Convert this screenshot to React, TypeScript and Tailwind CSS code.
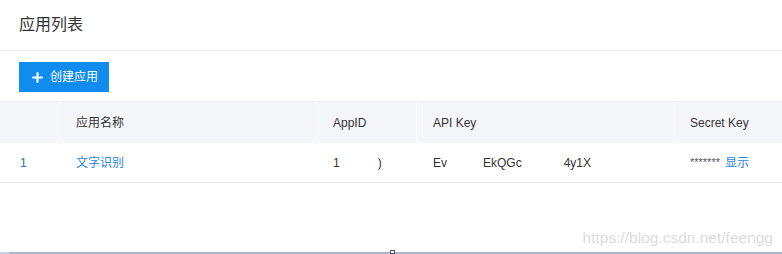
import { Plus } from "lucide-react";

type Col = {
  title: string;
  width: string;
};

const cols: Col[] = [
  { title: "", width: "w-[60px]" },
  { title: "应用名称", width: "w-[257px]" },
  { title: "AppID", width: "w-[100px]" },
  { title: "API Key", width: "w-[257px]" },
  { title: "Secret Key", width: "flex-1" },
];

export default function App() {
  return (
    <div
      className="relative w-[782px] h-[254px] bg-white overflow-hidden text-[#333]"
      style={{ fontFamily: '"Liberation Sans", "Noto Sans CJK SC", sans-serif' }}
    >
      <div className="h-[51px] flex items-center px-[19px] border-b border-[#e8e8e8]">
        <h1 className="text-[16px] text-[#333] leading-none">应用列表</h1>
      </div>

      <div className="px-[19px] pt-[11px] pb-[9px]">
        <button className="w-[90px] h-[30px] bg-[#108cee] text-white text-[12px] flex items-center justify-center gap-[5px]">
          <Plus className="w-[15px] h-[15px]" strokeWidth={3.4} />
          <span>创建应用</span>
        </button>
      </div>

      {/* 表格 */}
      <div className="border-t border-[#eef0f4]">
        <div className="flex h-[41px] bg-[#f5f6fa] text-[12px] text-[#333]">
          {cols.map((c, i) => (
            <div
              key={i}
              className={`${c.width} flex items-center pl-[16px] ${
                i < cols.length - 1 ? "border-r border-white" : ""
              }`}
            >
              {c.title}
            </div>
          ))}
        </div>
        <div className="flex h-[40px] text-[12px] border-b border-[#e8e8e8]">
          <div className="w-[60px] flex items-center pl-[20px] text-[#2a6fc0]">1</div>
          <div className="w-[257px] flex items-center pl-[16px] text-[#1f86e6]">文字识别</div>
          <div className="w-[100px] flex items-center pl-[16px] text-[#333]">
            <span>1</span>
            <span className="ml-[38px]">)</span>
          </div>
          <div className="w-[257px] flex items-center pl-[16px] text-[#333]">
            <span>Ev</span>
            <span className="ml-[36px]">EkQGc</span>
            <span className="ml-[42px]">4y1X</span>
          </div>
          <div className="flex-1 flex items-center pl-[16px] gap-[5px]">
            <span className="text-[#555] text-[11px]">*******</span>
            <span className="text-[#1f86e6]">显示</span>
          </div>
        </div>
      </div>

      <div className="absolute right-[9px] top-[226px] text-[15.5px] text-[#dcdcdc]">
        https://blog.csdn.net/feengg
      </div>

      <div className="absolute left-0 right-0 bottom-0 h-[2px] flex">
        <div className="w-[9px] bg-[#c8d2e0]" />
        <div className="flex-1 bg-[#a9b7ca]" />
      </div>
      <div className="absolute left-[390px] bottom-0 w-[5px] h-[4px] border border-[#555] bg-white" />
    </div>
  );
}
